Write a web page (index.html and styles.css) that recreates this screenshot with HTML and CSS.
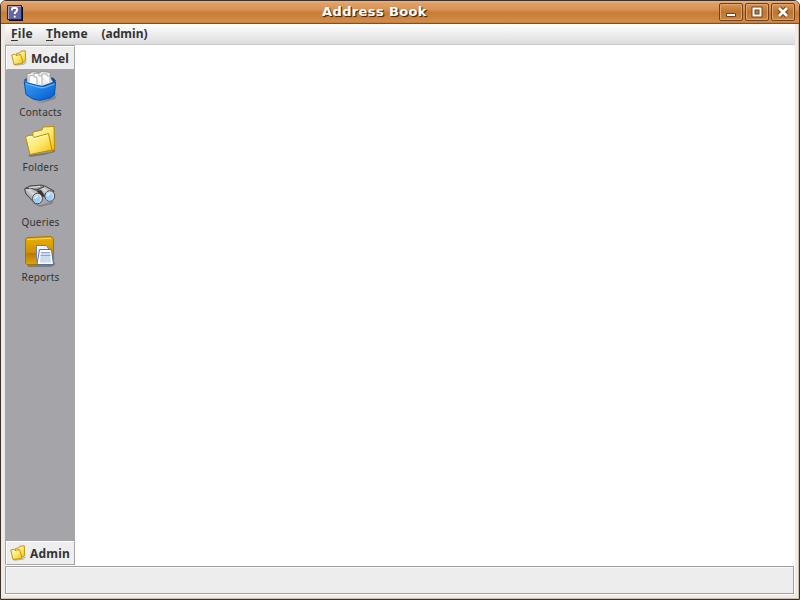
FILE: index.html
```
<!DOCTYPE html>
<html lang="en">
<head>
<meta charset="utf-8">
<title>Address Book</title>
<link rel="stylesheet" href="styles.css">
</head>
<body>
<svg class="defs" width="0" height="0" aria-hidden="true">
  <defs>
    <linearGradient id="gold" x1="0" y1="0" x2="1" y2="1"><stop offset="0" stop-color="#fffbc0"/><stop offset=".5" stop-color="#fdea74"/><stop offset="1" stop-color="#f0bd00"/></linearGradient>
    <linearGradient id="blue" x1="0" y1="0" x2="1" y2="1"><stop offset="0" stop-color="#3ba0fb"/><stop offset="1" stop-color="#0358c8"/></linearGradient>
    <linearGradient id="amber" x1="0" y1="0" x2="0" y2="1"><stop offset="0" stop-color="#eab000"/><stop offset=".58" stop-color="#cf9000"/><stop offset=".6" stop-color="#b87800"/><stop offset="1" stop-color="#e0a510"/></linearGradient>
    <linearGradient id="tube" x1="1" y1="0" x2="0" y2="1"><stop offset="0" stop-color="#666"/><stop offset=".45" stop-color="#d8d8d8"/><stop offset="1" stop-color="#484848"/></linearGradient>
    <symbol id="small-folder" viewBox="0 0 16 16">
      <path d="M3 14.5 12 14 15.5 11V12.5L13 14.8 4 15.8Z" fill="#777" opacity=".5"/>
      <path d="M5.5 3.5 9 2.8 9.8 1.2 14.3.8 14.7 10.5 11.5 13 5 12Z" fill="url(#gold)" stroke="#c08c08" stroke-width=".9"/>
      <path d="M.8 5 4 4.2 5 5.5 9.5 4.5 12 12.5 11.5 13.5 3 14.5Z" fill="url(#gold)" stroke="#c08a05" stroke-width=".9"/>
    </symbol>
  </defs>
</svg>
<div class="window">
  <header class="titlebar">
    <svg class="app-icon" width="17" height="17" viewBox="0 0 17 17">
      <path d="M2 2H16V16H2Z" fill="#080b20"/><path d="M.5.5H14.5V14.5H.5Z" fill="#6667a1" stroke="#20244a"/><path d="M1.5 14V1.5H14" fill="none" stroke="#a5a5cf"/>
      <path d="M5 5.5V4.2Q5 3 6.3 3H8.7Q10 3 10 4.3V5.3Q10 6.2 9 6.8Q7.7 7.6 7.7 9M7.7 10.7V12.5" fill="none" stroke="#fff" stroke-width="2"/>
    </svg>
    <h1>Address Book</h1>
    <div class="controls">
      <span class="control"><svg width="24" height="18" viewBox="0 0 24 18"><path d="M7.5 10.5H16.5V13.5H7.5Z" fill="#fff" stroke="#71401c"/></svg></span>
      <span class="control"><svg width="24" height="18" viewBox="0 0 24 18"><path d="M8.5 5.5H15.5V12.5H8.5Z" fill="none" stroke="#71401c" stroke-width="4"/><path d="M8.5 5.5H15.5V12.5H8.5Z" fill="none" stroke="#fff" stroke-width="2"/></svg></span>
      <span class="control"><svg width="24" height="18" viewBox="0 0 24 18"><path d="M8 5 16 13M16 5 8 13" stroke="#71401c" stroke-width="4.6"/><path d="M8 5 16 13M16 5 8 13" stroke="#fff" stroke-width="2.8"/></svg></span>
    </div>
  </header>
  <div class="client">
    <nav class="menubar"><span class="m-file"><u>F</u>ile</span><span class="m-theme"><u>T</u>heme</span><span class="m-admin">(admin)</span></nav>
    <div class="workspace">
      <aside class="sidebar">
        <div class="tab tab-model"><svg width="16" height="16"><use href="#small-folder"/></svg><span>Model</span></div>
        <div class="items">
          <div class="item">
            <svg width="36" height="34" viewBox="0 0 36 34">
              <path d="M5 26 18 33 35 25 33 29 20 33Z" fill="#444" opacity=".35"/>
              <path d="M2.5 10 6 8H31L33.5 11 18 18Z" fill="#0650aa" stroke="#07499b"/>
              <path d="M5 12V4L9 3V2H14L17 3 20 1.5 25 2 28 2.5 29 9 31 12 18 17Z" fill="#ededed" stroke="#898989" stroke-width=".8"/>
              <path d="M7 13V6L12 5V7H15V14M12 5V3.5H17V6H20V15M20 6V4H25V6H28V14" fill="#fafafa" stroke="#aaa" stroke-width=".9"/>
              <path d="M2.2 11.5 5 13 18 16 21 16.3 33.5 12 32.5 25 28 28 18.5 30.5 11 29 4 24.5Z" fill="url(#blue)" stroke="#0751ac"/>
              <path d="M3.5 13.5 18 17.7 22 17.7 32.5 14" fill="none" stroke="#60b8ff" stroke-width="1.2"/>
            </svg><span>Contacts</span></div>
          <div class="item">
            <svg width="36" height="34" viewBox="0 0 36 34">
              <path d="M6 30 29 27 33 24V27L22 30 8 32Z" fill="#444" opacity=".45"/>
              <path d="M11 7 20 5 21 2 32 1.5 32.5 24 28 27 10 24Z" fill="url(#gold)" stroke="#c08c00"/>
              <path d="M3.5 11.5 10 10 12 12.5 26.5 8.5 30 25 8 29.5Z" fill="url(#gold)" stroke="#c08900"/>
              <path d="M5 12.5 10 11.3 12 13.8 25.5 10" fill="none" stroke="#fffbd0"/>
            </svg><span>Folders</span></div>
          <div class="item">
            <svg width="36" height="34" viewBox="0 0 36 34">
              <path d="M10 23 19 25 32 21 30 24 18 27Z" fill="#555" opacity=".4"/>
              <path d="M18 5.5 23 6 32 11 27 20 16 12Z" fill="url(#tube)" stroke="#404040"/>
              <path d="M2.5 9 6 7.5 12 8 20 15 13 23.5 4 14Z" fill="url(#tube)" stroke="#404040"/>
              <path d="M3 8.5 8 6 20 5 22 7 14 10 10 8.5Z" fill="#999" stroke="#444"/>
              <path d="M7 7.8 18 6.3" stroke="#ddd" stroke-width="1.3"/>
              <path d="M15 11 19 10 23 16 20 17Z" fill="#353535"/>
              <ellipse cx="15.5" cy="18.5" rx="4.9" ry="5.2" fill="#e4e4e4" stroke="#494949"/>
              <ellipse cx="27.8" cy="16" rx="4.9" ry="5.2" fill="#e4e4e4" stroke="#494949"/>
              <ellipse cx="15" cy="19" rx="3.5" ry="4" fill="#9bcfff"/><ellipse cx="27.3" cy="16.5" rx="3.5" ry="4" fill="#9bcfff"/>
              <path d="M13 18.5Q13.5 16.5 16 16.5M25.3 16Q26 14 28.3 14" fill="none" stroke="#effaff" stroke-width="1.5"/>
            </svg><span>Queries</span></div>
          <div class="item">
            <svg width="36" height="34" viewBox="0 0 36 34">
              <path d="M5 29H31L33 27V30L29 32H6Z" fill="#555" opacity=".5"/>
              <path d="M3.5 4 6 2.5 29 1.5 31.5 3.5V28L28 29.5H5L3.5 28Z" fill="url(#amber)" stroke="#a87300"/>
              <path d="M5 4.5 29 3.3" stroke="#ffd552"/>
              <path d="M14.5 10.5H24.5L27 14.5V25.5H14.5Z" fill="#f1f5ff" stroke="#6b80aa"/>
              <path d="M15 29.5 17.5 14.5H29.5L31.5 29.5Z" fill="#fff" stroke="#58709f"/>
              <path d="M19 17.5H28L29 27.5H17.8Z" fill="#cddbf1"/><path d="M19 17.5H28M18.5 20.5H28.5" stroke="#8296ba" stroke-width=".8"/>
            </svg><span>Reports</span></div>
        </div>
        <div class="tab tab-admin"><svg width="16" height="16"><use href="#small-folder"/></svg><span>Admin</span></div>
      </aside>
      <main></main>
    </div>
    <footer class="statusbar"></footer>
  </div>
</div>
</body>
</html>
```
FILE: styles.css
```
* { box-sizing: border-box; }
body { margin: 0; background: #fff; }
.defs { position: absolute; }
.window {
  width: 800px; height: 600px; display: flex; flex-direction: column; overflow: hidden;
  border: 1px solid #3c302a; border-radius: 6px 6px 0 0; background: #efebe7;
  box-shadow: inset -1px -1px #cbbdb0;
}
.titlebar {
  height: 23px; flex: none; display: flex; align-items: center; padding: 0 4px 0 6px;
  background: linear-gradient(#f1b47c 0, #dfa067 2px, #d99457 8px, #c67d35 12px, #d58c48 21px, #b87535 22px);
  border-bottom: 1px solid #80502a;
}
.app-icon { margin-top: 2px; }
h1 {
  margin: 0 0 0 298px; width: 110px; font: bold 13px/20px "DejaVu Sans", sans-serif; letter-spacing: .38px;
  color: #fff; text-shadow: 1px 1px 1px #4b2a12, 1px 1px #5d3a20; white-space: nowrap; flex: none;
}
.controls { display: flex; gap: 2px; margin-left: auto; }
.control {
  width: 24px; height: 18px; border: 1px solid #71401c; border-radius: 2px;
  box-shadow: inset 0 0 0 1px #dfa570; background: linear-gradient(#d99758, #bd752f 50%, #cc8742);
}
.control svg { display: block; margin: -1px; }
.client { flex: 1; min-height: 0; margin: 0 4px 4px; display: flex; flex-direction: column; background: #fff; }
.menubar {
  height: 21px; flex: none; display: flex; padding-left: 6px;
  border-bottom: 1px solid #ccc; background: linear-gradient(#fff, #dcdcdc);
  font: bold 12px/19px "Noto Sans", sans-serif; color: #333;
}
.menubar span { white-space: nowrap; }
.menubar u { text-underline-offset: 2px; }
.m-file { width: 35px; letter-spacing: .25px; }
.m-theme { width: 55px; letter-spacing: .2px; }
.m-admin { padding-left: .5px; }
.workspace { height: 520px; flex: none; display: flex; }
.sidebar {
  width: 70px; display: flex; flex-direction: column;
  border-top: 1px solid #a5a4a9; background: #a5a4a9;
}
main { flex: 1; background: #fff; }
.tab {
  height: 24px; flex: none; display: flex; align-items: center; gap: 4px; background: #eee;
  margin-left: 1px; border: 1px solid #fff; border-right-color: #a5a4a9; border-bottom-color: #a5a4a9;
  font: bold 12px/20px "Noto Sans", sans-serif; letter-spacing: .2px; color: #333;
}
.tab span { padding-top: 2px; }
.tab-model { padding-left: 4px; }
.tab-admin { padding-left: 3px; }
.items { flex: 1; }
.item { height: 55px; display: flex; flex-direction: column; align-items: center; }
.item svg { flex: none; }
.item span { font: 10px/16px "Noto Sans", sans-serif; letter-spacing: .2px; padding-left: 1px; color: #333; white-space: nowrap; }
.statusbar { height: 28px; flex: none; margin: 1px 1px 0 0; border: 1px solid #a0a0a0; background: #ededed; box-shadow: inset 1px 1px #f8f8f8; }
```
